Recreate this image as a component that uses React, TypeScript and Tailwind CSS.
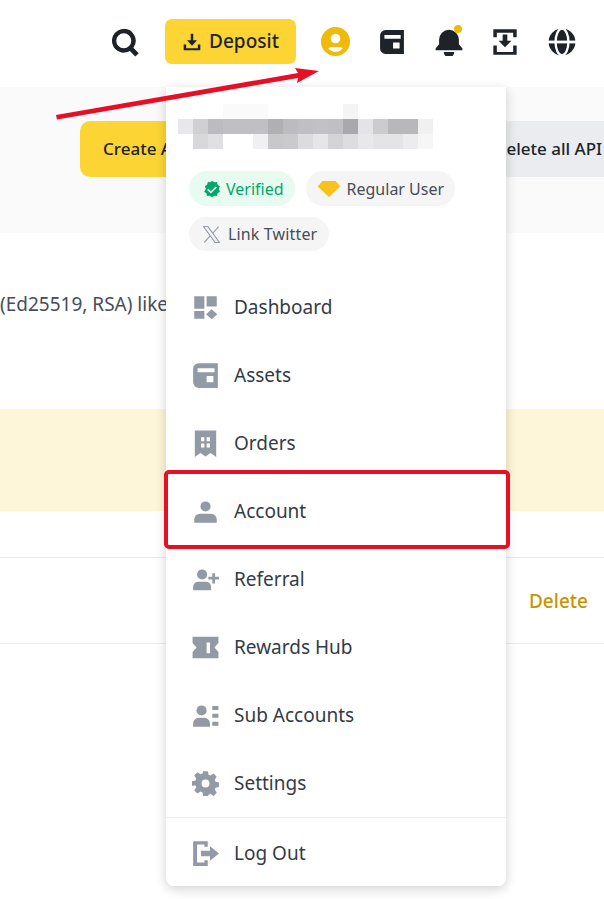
import React from 'react';

// pixelated user name, 15px blocks
const blurRows = [
  ['#ffffff', '#ffffff', '#ffffff', '#fafafa', '#fafafa', '#fafafa', '#ffffff', '#ffffff', '#ffffff', '#ffffff', '#ffffff', '#f4f4f5', '#ffffff', '#ffffff', '#ffffff', '#ffffff', '#ffffff'],
  ['#e8e8ea', '#d0d0d3', '#bcbcc0', '#c0c0c4', '#c0c0c4', '#c0c0c4', '#b0b0b3', '#bcbcc0', '#c0c0c4', '#c2c2c6', '#c0c0c4', '#a9a9ad', '#e4e4e8', '#cccccf', '#b8b8bb', '#b8b8bb', '#f0f0f0'],
  ['#ffffff', '#d8d8da', '#e0e0e2', '#ffffff', '#ffffff', '#f0f0f2', '#c8c8cb', '#cacacd', '#dcdcde', '#e6e6e8', '#d4d4d7', '#dddde0', '#e8e8ea', '#e4e4e6', '#e4e4e6', '#ececee', '#f6f6f6'],
];

function Icon({ children, className }: { children: React.ReactNode; className?: string }) {
  return (
    <svg viewBox="0 0 24 24" fill="currentColor" className={className}>
      {children}
    </svg>
  );
}

const WalletPath = (
  <path fillRule="evenodd" d="M6 1h17v22H6a5 5 0 0 1-5-5V6a5 5 0 0 1 5-5zm-1 4.500V9h15V5.500zM13 12.500V18h6v-5.500z" />
);

const menu: { label: string; icon: React.ReactNode }[] = [
  {
    label: 'Dashboard',
    icon: <path d="M2 2h9v11H2zM13 2h9v9h-9zM2 15h9v7H2zM17.500 13.500 22.500 18l-5 4.500-5-4.500z" />,
  },
  { label: 'Assets', icon: WalletPath },
  {
    label: 'Orders',
    icon: <path fillRule="evenodd" d="M2.500 0.500h19V24l-5-3.500-4.500 3-4.500-3-5 3.500zm5.500 6v3.500h3V6.500zm5 0v3.500h3V6.500zm-5 5.500v3.500h3V12zm5 0v3.500h3V12z" />,
  },
  {
    label: 'Account',
    icon: (
      <>
        <circle cx="12" cy="7.500" r="4.500" />
        <path d="M2 22v-3a5 5 0 0 1 5-5h10a5 5 0 0 1 5 5v3z" />
      </>
    ),
  },
  {
    label: 'Referral',
    icon: (
      <>
        <circle cx="9" cy="7.500" r="4.500" />
        <path d="M1 21.500v-3a4.500 4.500 0 0 1 4.500-4.500h7a4.500 4.500 0 0 1 4.500 4.500v3zM18 6.500h2.500v3H24v2.500h-3.500v3.500H18V12h-3.500V9.500H18z" />
      </>
    ),
  },
  {
    label: 'Rewards Hub',
    icon: <path fillRule="evenodd" d="M0.500 2.500h23v5.500L20 12l3.500 4v5.500H0.500V16L4 12 0.500 8zm12.500 5V17h3V7.500z" />,
  },
  {
    label: 'Sub Accounts',
    icon: (
      <>
        <circle cx="8.500" cy="7.500" r="4.500" />
        <path d="M1 22v-3a5 5 0 0 1 5-5h5a5 5 0 0 1 5 5v3zM18 3.500h5.500v3.500H18zM18 10.500h5.500v3.500H18zM18 17.500h5.500V21H18z" />
      </>
    ),
  },
  {
    label: 'Settings',
    icon: (
      <path fillRule="evenodd" d="M10 1h4l.7 3.200 1.700.7 2.800-1.800 2.800 2.800-1.800 2.800.7 1.700 3.100.6v4l-3.100.7-.7 1.700 1.800 2.800-2.800 2.800-2.800-1.800-1.700.7L14 23h-4l-.7-3.100-1.700-.7-2.800 1.800-2.800-2.800 1.800-2.800-.7-1.700L0 13.900v-4l3.100-.6.7-1.700L2 4.800 4.800 2l2.800 1.800 1.700-.7zM12 8.500a3.500 3.500 0 1 0 0 7 3.500 3.500 0 0 0 0-7z" />
    ),
  },
];

export default function App() {
  return (
    <div className="relative h-[899px] w-[604px] overflow-hidden bg-white font-['Noto_Sans',sans-serif] text-[#1e2329]">
      <header className="flex h-[87px] items-center justify-end pb-[4px] pr-[28px]">
        <Icon className="h-[30px] w-[30px]">
          <path fillRule="evenodd" d="M11 1.500a9.500 9.500 0 0 1 7.700 15.100l4.300 4.300-2.700 2.700-4.400-4.400A9.500 9.500 0 1 1 11 1.500zm0 3.500a6 6 0 1 0 0 12 6 6 0 0 0 0-12z" />
        </Icon>
        <button className="ml-[25px] flex h-[45px] w-[131px] items-center justify-center gap-[7px] rounded-[7px] bg-[#fcd535] text-[19px] font-medium">
          <Icon className="h-[20px] w-[20px]">
            <path d="M10.500 2h3v8h4.500L12 16.500 6 10h4.500zM2 15h3v4.500h14V15h3v7H2z" />
          </Icon>
          Deposit
        </button>
        <Icon className="ml-[25px] h-[29px] w-[29px] text-[#f0b90b]">
          <path fillRule="evenodd" d="M12 0a12 12 0 1 1 0 24 12 12 0 0 1 0-24zm0 5.500a4 4 0 1 0 0 8 4 4 0 0 0 0-8zM6 17.500c1.500 2 3.700 3 6 3s4.500-1 6-3c-1-.7-2-1-3.500-1h-5c-1.500 0-2.500.3-3.500 1z" />
        </Icon>
        <Icon className="ml-[29px] mr-[1px] h-[26px] w-[26px]">{WalletPath}</Icon>
        <div className="relative ml-[29px] h-[28px] w-[28px]">
          <Icon className="h-[28px] w-[28px]">
            <path d="M12 1.500a8.500 8.500 0 0 1 8.500 8.500v4l3 3.500V19H.5v-1.500l3-3.500v-4A8.500 8.500 0 0 1 12 1.500zM7.500 20.500h9a4.500 4.500 0 0 1-9 0z" />
          </Icon>
          <span className="absolute right-[1px] top-[-3px] h-[8px] w-[8px] rounded-full bg-[#f0b90b]" />
        </div>
        <Icon className="ml-[28px] h-[28px] w-[28px]">
          <path d="M2 1h20v7h-3V4H5v4H2zM10 5.500h4V11h3.500L12 16.500 6.500 11H10zM2 15h3v5.500h14V15h3v8H2z" />
        </Icon>
        <svg viewBox="0 0 24 24" className="ml-[29px] h-[28px] w-[28px]">
          <circle cx="12" cy="12" r="11.500" fill="currentColor" />
          <ellipse cx="12" cy="12" rx="5.500" ry="11.500" fill="none" stroke="#ffffff" strokeWidth="2" />
          <path d="M0 12h24" stroke="#ffffff" strokeWidth="2.400" />
        </svg>
      </header>

      <section className="flex h-[146px] items-start bg-[#fafafa] pl-[80px] pt-[34px]">
        <button className="flex h-[56px] w-[280px] shrink-0 items-center rounded-[10px] bg-[#fcd535] pl-[23px] text-[17px] font-medium whitespace-nowrap">
          Create API
        </button>
        <button className="ml-[114px] flex h-[56px] w-[200px] shrink-0 items-center rounded-[10px] bg-[#eaecef] pl-[20px] text-[17px] font-medium whitespace-nowrap">
          Delete all API
        </button>
      </section>

      <p className="mt-[59px] h-[24px] text-[19px] leading-[24px] whitespace-nowrap text-[#474d57]">
        (Ed25519, RSA) like
      </p>

      <div className="mt-[93px] h-[102px] bg-[#fef6d8]" />

      <div className="mt-[46px] flex h-[87px] items-center justify-end border-y border-[#eaecef] pr-[16px] pt-[2px]">
        <span className="text-[19px] font-medium text-[#c99400]">Delete</span>
      </div>

      {/* profile dropdown over the page */}
      <div className="absolute left-[166px] top-[87px] flex h-[799px] w-[340px] flex-col rounded-b-[8px] bg-white pt-[17px] shadow-[0_3px_12px_rgba(0,0,0,0.18)]">
        <svg viewBox="0 0 255 45" className="ml-[12px] h-[45px] w-[255px] shrink-0">
          {blurRows.map((row, y) =>
            row.map((c, x) => <rect key={`${x}-${y}`} x={x * 15} y={y * 15} width="15" height="15" fill={c} />),
          )}
        </svg>

        <div className="ml-[23px] mt-[22px] flex flex-wrap gap-x-[11px] gap-y-[11px]">
          <span className="flex h-[35px] items-center gap-[5px] rounded-full bg-[#e7fbf0] pl-[14px] pr-[11px] text-[16px] text-[#03a66d]">
            <Icon className="h-[18px] w-[18px] text-[#03a66d]">
              <path fillRule="evenodd" d="M12 1l3 2 3.600-.2.900 3.500 3 2-1.300 3.700 1.300 3.700-3 2-.9 3.500L15 21l-3 2-3-2-3.600.2-.9-3.500-3-2L3.800 12 2.500 8.300l3-2 .9-3.500L10 3zm5 7.500L10.500 15 7 11.700l-1.500 1.500 5 4.800 8-8z" />
            </Icon>
            Verified
          </span>
          <span className="flex h-[35px] items-center gap-[6px] rounded-full bg-[#f5f5f5] px-[11px] text-[16px] text-[#474d57]">
            <svg viewBox="0 0 24 18" className="h-[17px] w-[24px]">
              <path d="M5 1h14l5 6-12 11L0 7z" fill="#f8c21a" />
            </svg>
            Regular User
          </span>
          <span className="flex h-[34px] items-center gap-[7px] rounded-full bg-[#f5f5f5] pl-[13px] pr-[12px] text-[16px] text-[#474d57]">
            <svg viewBox="0 0 24 24" fill="none" stroke="#929aa5" strokeWidth="1.300" className="h-[19px] w-[19px]">
              <path d="M2 2h5.500L22 22h-5.500zM21 2 13.500 10.500M3 22l7.800-9" />
            </svg>
            <span className="tracking-[0.15px]">Link Twitter</span>
          </span>
        </div>

        <div className="mt-[22px] flex flex-col">
          {menu.map((m) => (
            <div key={m.label} className="flex h-[68px] items-center pl-[26px] text-[19px] text-[#333b47]">
              <Icon className="h-[27px] w-[27px] shrink-0 text-[#929aa5]">{m.icon}</Icon>
              <span className="ml-[15px]">{m.label}</span>
            </div>
          ))}
        </div>

        <div className="flex h-[68px] items-center border-t border-[#eaecef] pl-[26px] pt-[4px] text-[19px] text-[#333b47]">
          <Icon className="h-[27px] w-[27px] shrink-0 text-[#929aa5]">
            <path d="M1 1h13v5h-3V4H4.500v16H11v-2h3v5H1zM16 5.500 24 12l-8 6.500V14.500H8v-5h8z" />
          </Icon>
          <span className="ml-[15px]">Log Out</span>
        </div>
      </div>

      {/* annotations */}
      <div className="absolute left-[164px] top-[470px] h-[79px] w-[346px] rounded-[5px] border-4 border-[#e60f26]" />
      <svg viewBox="0 0 604 140" className="pointer-events-none absolute left-0 top-0 h-[140px] w-[604px]">
        <path d="M56 115 L298 73 L295 68 L319 71 L297 83 L298 78 L57 119.500 Z" fill="#e60f26" />
      </svg>
    </div>
  );
}
